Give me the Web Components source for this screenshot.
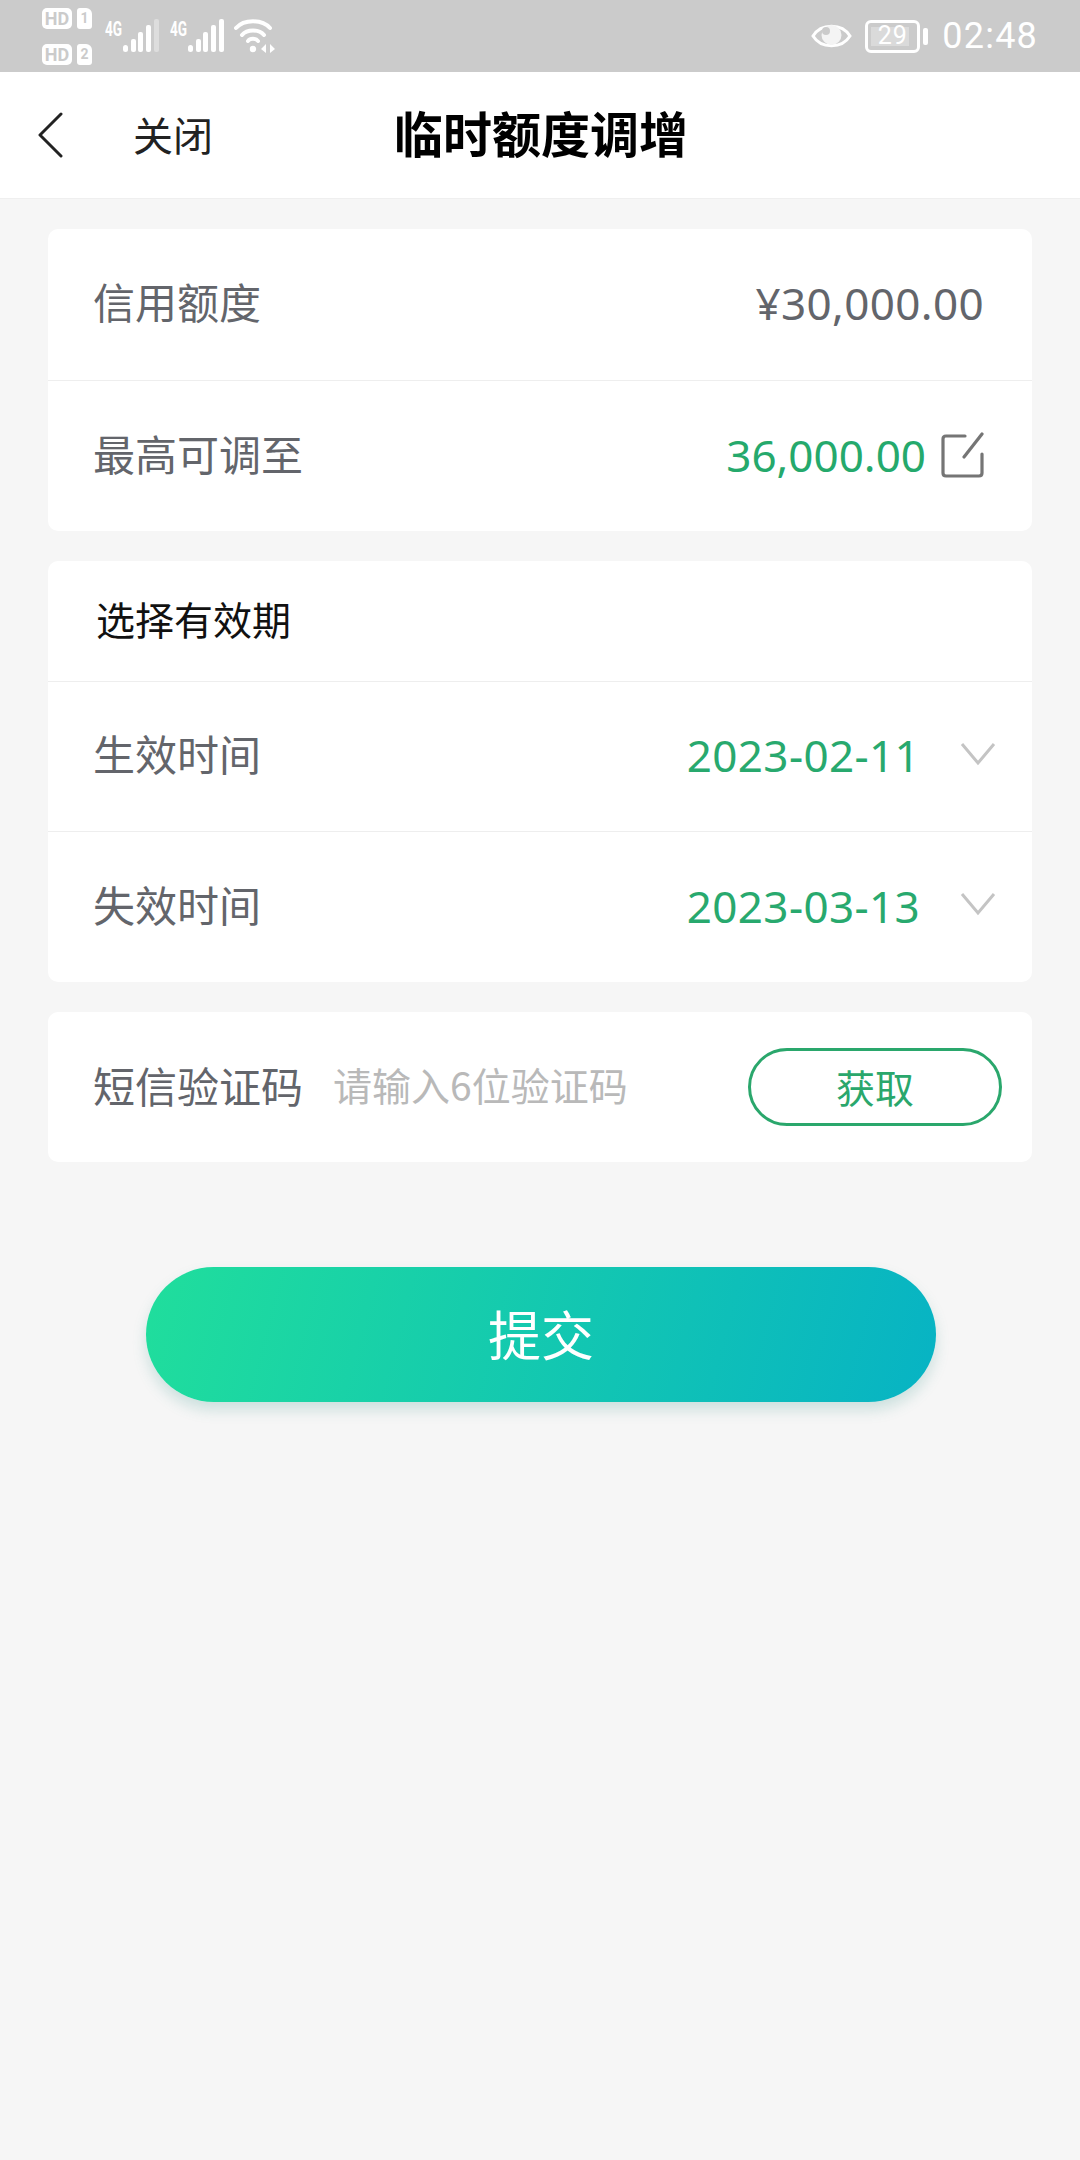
<!DOCTYPE html>
<html lang="zh-CN"><head><meta charset="utf-8"><title>临时额度调增</title>
<style>
html,body{margin:0;padding:0;background:#f6f6f6}
body{width:1080px;height:2160px;overflow:hidden;font-family:"Noto Sans CJK SC","Noto Sans",sans-serif}
main{display:flex;flex-direction:column;gap:30px;padding:30px 48px 0}
</style></head><body>
<status-bar></status-bar>
<nav-header></nav-header>
<main>
  <form-card>
    <form-row label="信用额度"><span style="color:#63656b">¥30,000.00</span></form-row>
    <form-row label="最高可调至"><span style="color:#25a96c;font-size:44px;letter-spacing:0">36,000.00</span><svg slot="icon" width="43" height="46" viewBox="0 0 43 46" fill="none" stroke="#757575" stroke-width="3.2" stroke-linecap="round" stroke-linejoin="round"><path d="M24 4H5Q2 4 2 7V41Q2 44 5 44H38Q41 44 41 41V22"/><path d="M23 25 41 2"/></svg></form-row>
  </form-card>
  <form-card>
    <card-title>选择有效期</card-title>
    <form-row label="生效时间" chevron style="height:150px"><span style="color:#28a96e">2023-02-11</span></form-row>
    <form-row label="失效时间" chevron><span style="color:#28a96e">2023-03-13</span></form-row>
  </form-card>
  <form-card><sms-row></sms-row></form-card>
  <submit-button>提交</submit-button>
</main>
<template id="status">
<style>
:host{display:flex;height:72px;background:#cbcbcb;color:#fff;align-items:center;justify-content:space-between;padding:0 43px 0 42px;box-sizing:border-box;font-family:Roboto,sans-serif}
.g{display:flex;align-items:center}
.sims{display:grid;grid-template-columns:30px 15px;gap:15px 5px;margin-top:1px}
.hd{background:#fff;color:#cbcbcb;border-radius:5px;height:21px;font:700 18px/21px Roboto,sans-serif;text-align:center}
.n{background:#fff;color:#cbcbcb;border-radius:3px 6px 3px 3px;height:21px;font:700 14px/21px Roboto,sans-serif;text-align:center}
.sig{position:relative;width:53px;height:34px;margin-left:12px}
.sig b{position:absolute;left:0;top:0;font:700 20px/20px Roboto,sans-serif;transform:scaleX(.68);transform-origin:left}
.sig svg{position:absolute;left:18px;top:0}
.eye{margin-right:13px}
.bat{position:relative;width:55px;height:33px;box-sizing:border-box;border:3px solid #fff;border-radius:6px;display:flex;align-items:center;justify-content:center;font:400 25px/24px Roboto,sans-serif;letter-spacing:1px}
.bat i{position:absolute;left:3px;top:4px;bottom:4px;width:38px;background:#fff;opacity:.3}
.bat span{position:relative}
.tip{width:5px;height:17px;background:#fff;border-radius:2px;margin:0 14px 0 3px}
.t{font:400 36px/40px Roboto,sans-serif;letter-spacing:1.2px;margin-right:-1px}
</style>
<div class="g">
 <div class="sims"><span class="hd">HD</span><span class="n">1</span><span class="hd">HD</span><span class="n">2</span></div>
 <div class="sig" style="margin-left:13px"><b>4G</b><svg width="36" height="34" viewBox="0 0 36 34" fill="#fff"><rect x="0" y="26" width="5" height="7" rx="2.5"/><rect x="8" y="20" width="5" height="13" rx="2"/><rect x="15" y="13" width="5" height="20" rx="2"/><rect x="23" y="6" width="5" height="27" rx="2"/><rect x="31" y="0" width="5" height="33" rx="2" opacity=".35"/></svg></div>
 <div class="sig"><b>4G</b><svg width="36" height="34" viewBox="0 0 36 34" fill="#fff"><rect x="0" y="26" width="5" height="7" rx="2.5"/><rect x="8" y="20" width="5" height="13" rx="2"/><rect x="15" y="13" width="5" height="20" rx="2"/><rect x="23" y="6" width="5" height="27" rx="2"/><rect x="31" y="0" width="5" height="33" rx="2"/></svg></div>
 <svg width="42" height="36" viewBox="0 0 42 36" fill="none" stroke="#fff" stroke-width="4" stroke-linecap="round" style="margin-left:10px"><path d="M3 10C11 1 29 1 37 10"/><path d="M9 17C14 11 26 11 31 17"/><path d="M15 23C17 20 23 20 25 23"/><circle cx="20" cy="31" r="2" fill="#fff" stroke-width="2.4"/><path d="M33 26v9l-5-4zM37 26v9l5-4z" fill="#fff" stroke="none"/></svg>
</div>
<div class="g">
 <svg class="eye" width="41" height="28" viewBox="0 0 41 28"><path d="M2 14C10 1 31 1 39 14 31 27 10 27 2 14Z" fill="none" stroke="#fff" stroke-width="3"/><circle cx="20.500" cy="13" r="10" fill="#f4f4f4"/><circle cx="15" cy="9" r="4" fill="#cbcbcb"/></svg>
 <div class="bat"><i></i><span>29</span></div><div class="tip"></div>
 <span class="t">02:48</span>
</div>
</template>
<template id="header">
<style>
:host{display:grid;grid-template-columns:1fr auto 1fr;align-items:center;height:127px;background:#fff;border-bottom:1px solid #efefef;box-sizing:border-box;color:#222}
.l{display:flex;align-items:center}
svg{margin-left:37px}
.c{font-size:40px;margin-left:70px;padding-bottom:3px}
h1{margin:0;font-size:49px;font-weight:700;color:#000;line-height:60px;padding:0 0 6px 2px}
</style>
<div class="l"><svg width="26" height="46" viewBox="0 0 26 46" fill="none" stroke="#222" stroke-width="3" stroke-linecap="round" stroke-linejoin="round"><path d="M24 2 3 23 24 44"/></svg><span class="c">关闭</span></div>
<h1>临时额度调增</h1><span></span>
</template>
<template id="card"><style>:host{display:block;background:#fff;border-radius:10px;overflow:hidden}::slotted(*:not(:first-child)){border-top:1px solid #eeeeee}</style><slot></slot></template>
<template id="ctitle"><style>:host{display:flex;align-items:center;height:120px;box-sizing:border-box;font-size:39px;color:#111;padding:0 48px 7px}</style><slot></slot></template>
<template id="row">
<style>
:host{display:flex;align-items:center;height:151px;box-sizing:border-box;padding:0 48px 0 45px;font-size:42px;color:#63656b}
#lab{padding-bottom:8px}
.v{margin-left:auto;font-family:"Noto Sans",sans-serif;font-size:44px;letter-spacing:.35px;line-height:50px;display:flex;align-items:center;padding-bottom:3px}
::slotted(svg){margin-left:15px}
.chev{display:none;margin-left:40px;margin-right:-12px;margin-bottom:6px}
:host([chevron]) .chev{display:block}
</style>
<span id="lab"></span><span class="v"><slot></slot><slot name="icon"></slot></span>
<svg class="chev" width="36" height="24" viewBox="0 0 36 24" fill="none" stroke="#c4c4c4" stroke-width="3"><path d="M2 2 18 21 34 2"/></svg>
</template>
<template id="sms">
<style>
:host{display:flex;align-items:center;height:150px;padding:0 30px 0 45px;box-sizing:border-box;color:#63656b;font-size:42px}
span{padding-bottom:6px}
.p{font-size:39px;color:#b9b9b9;margin-left:30px}
.b{margin-left:auto;width:254px;height:78px;box-sizing:border-box;border:3px solid #2aa76c;border-radius:39px;color:#2aa76c;font-size:39px;display:flex;align-items:center;justify-content:center;padding-bottom:3px}
</style>
<span>短信验证码</span><span class="p">请输入6位验证码</span><span class="b">获取</span>
</template>
<template id="submit">
<style>
:host{display:flex;align-items:center;justify-content:center;width:790px;height:135px;margin:75px 0 0 98px;padding-bottom:4px;box-sizing:border-box;border-radius:68px;background:linear-gradient(105deg,#20de9c,#07b3c4);box-shadow:0 8px 14px rgba(60,150,140,.22);color:#fff;font-size:53px}
</style><slot></slot>
</template>
<script>
const mk=(n,t,f)=>customElements.define(n,class extends HTMLElement{constructor(){super();this.attachShadow({mode:"open"}).appendChild(document.getElementById(t).content.cloneNode(true));}connectedCallback(){if(f)f(this)}});
mk("status-bar","status");mk("nav-header","header");mk("form-card","card");mk("card-title","ctitle");
mk("form-row","row",e=>{e.shadowRoot.getElementById("lab").textContent=e.getAttribute("label")});
mk("sms-row","sms");mk("submit-button","submit");
</script>
</body></html>
